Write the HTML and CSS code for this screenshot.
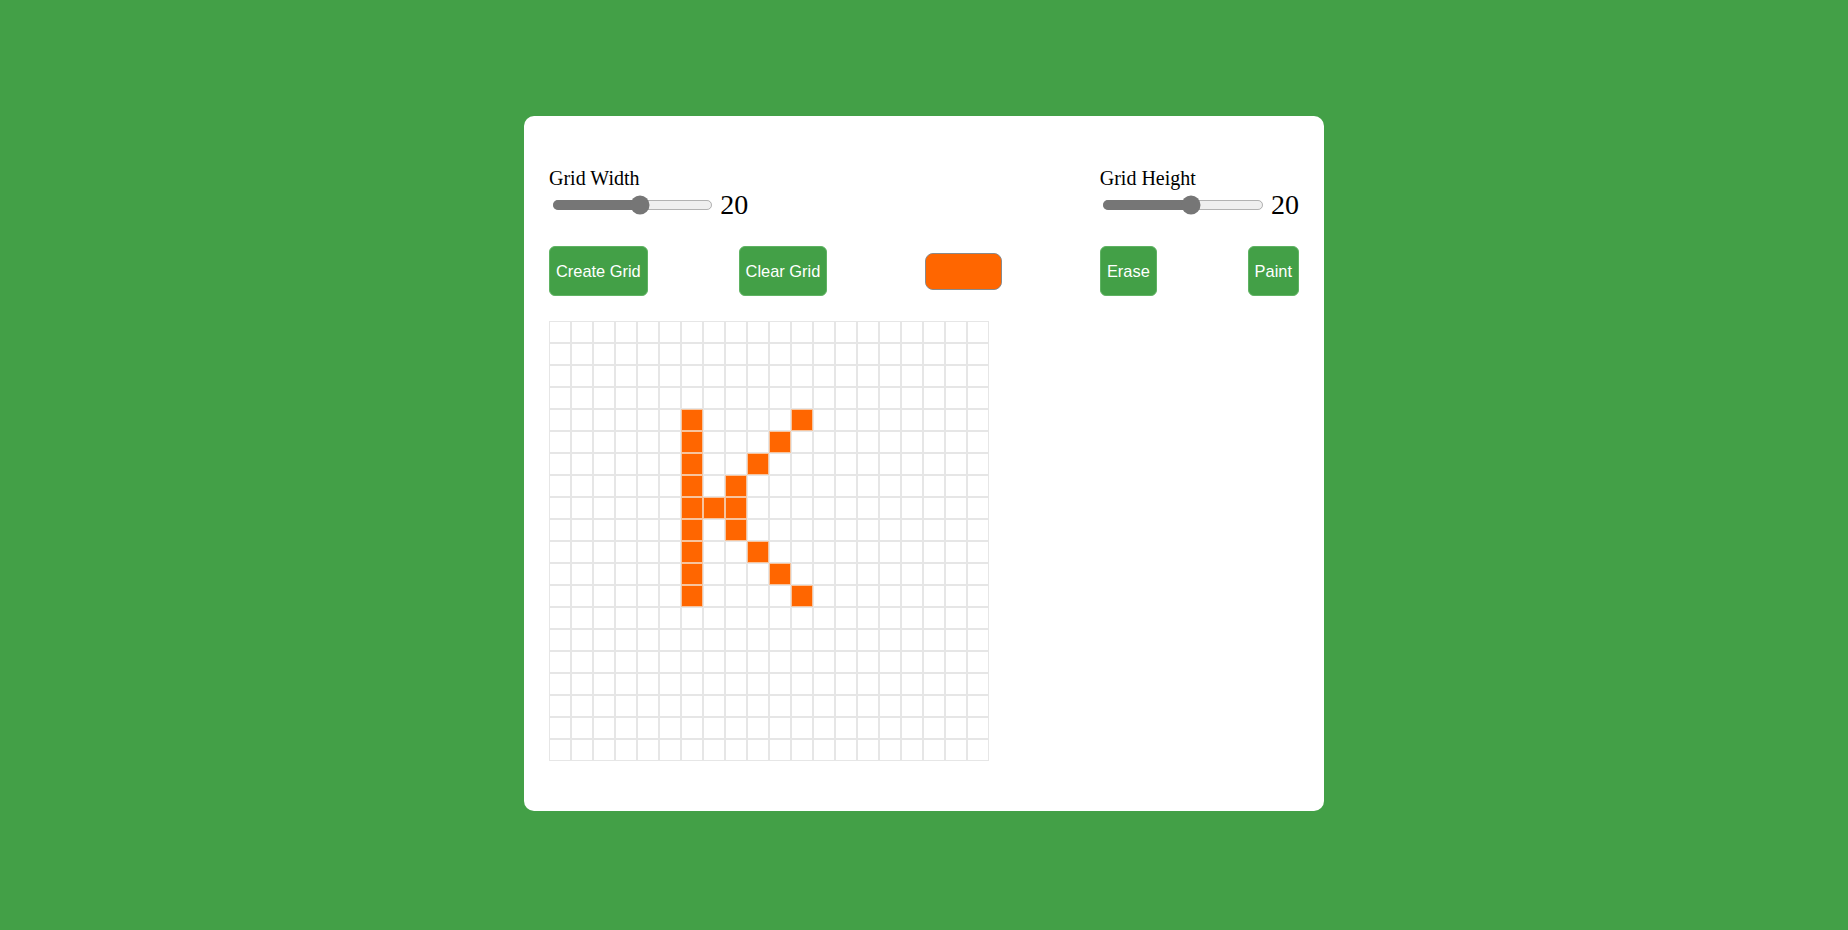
FILE: index.html
```html
<!DOCTYPE html>
<html>
<head>
<meta charset="utf-8">
<title>Pixel Art Maker</title>
<link rel="stylesheet" href="styles.css">
</head>
<body>
<div class="card">
  <div class="sizes">
    <div class="size">
      <label class="label">Grid Width</label>
      <div class="slider-row"><input class="range" type="range" min="1" max="35" value="20"><span class="val">20</span></div>
    </div>
    <div class="size">
      <label class="label">Grid Height</label>
      <div class="slider-row"><input class="range" type="range" min="1" max="35" value="20"><span class="val">20</span></div>
    </div>
  </div>
  <div class="actions">
    <button class="btn">Create Grid</button>
    <button class="btn">Clear Grid</button>
    <input class="picker" type="color" value="#ff6600">
    <button class="btn">Erase</button>
    <button class="btn">Paint</button>
  </div>
  <div class="grid">
    <span class="c"></span><span class="c"></span><span class="c"></span><span class="c"></span><span class="c"></span><span class="c"></span><span class="c"></span><span class="c"></span><span class="c"></span><span class="c"></span><span class="c"></span><span class="c"></span><span class="c"></span><span class="c"></span><span class="c"></span><span class="c"></span><span class="c"></span><span class="c"></span><span class="c"></span><span class="c"></span>
    <span class="c"></span><span class="c"></span><span class="c"></span><span class="c"></span><span class="c"></span><span class="c"></span><span class="c"></span><span class="c"></span><span class="c"></span><span class="c"></span><span class="c"></span><span class="c"></span><span class="c"></span><span class="c"></span><span class="c"></span><span class="c"></span><span class="c"></span><span class="c"></span><span class="c"></span><span class="c"></span>
    <span class="c"></span><span class="c"></span><span class="c"></span><span class="c"></span><span class="c"></span><span class="c"></span><span class="c"></span><span class="c"></span><span class="c"></span><span class="c"></span><span class="c"></span><span class="c"></span><span class="c"></span><span class="c"></span><span class="c"></span><span class="c"></span><span class="c"></span><span class="c"></span><span class="c"></span><span class="c"></span>
    <span class="c"></span><span class="c"></span><span class="c"></span><span class="c"></span><span class="c"></span><span class="c"></span><span class="c"></span><span class="c"></span><span class="c"></span><span class="c"></span><span class="c"></span><span class="c"></span><span class="c"></span><span class="c"></span><span class="c"></span><span class="c"></span><span class="c"></span><span class="c"></span><span class="c"></span><span class="c"></span>
    <span class="c"></span><span class="c"></span><span class="c"></span><span class="c"></span><span class="c"></span><span class="c"></span><span class="c p"></span><span class="c"></span><span class="c"></span><span class="c"></span><span class="c"></span><span class="c p"></span><span class="c"></span><span class="c"></span><span class="c"></span><span class="c"></span><span class="c"></span><span class="c"></span><span class="c"></span><span class="c"></span>
    <span class="c"></span><span class="c"></span><span class="c"></span><span class="c"></span><span class="c"></span><span class="c"></span><span class="c p"></span><span class="c"></span><span class="c"></span><span class="c"></span><span class="c p"></span><span class="c"></span><span class="c"></span><span class="c"></span><span class="c"></span><span class="c"></span><span class="c"></span><span class="c"></span><span class="c"></span><span class="c"></span>
    <span class="c"></span><span class="c"></span><span class="c"></span><span class="c"></span><span class="c"></span><span class="c"></span><span class="c p"></span><span class="c"></span><span class="c"></span><span class="c p"></span><span class="c"></span><span class="c"></span><span class="c"></span><span class="c"></span><span class="c"></span><span class="c"></span><span class="c"></span><span class="c"></span><span class="c"></span><span class="c"></span>
    <span class="c"></span><span class="c"></span><span class="c"></span><span class="c"></span><span class="c"></span><span class="c"></span><span class="c p"></span><span class="c"></span><span class="c p"></span><span class="c"></span><span class="c"></span><span class="c"></span><span class="c"></span><span class="c"></span><span class="c"></span><span class="c"></span><span class="c"></span><span class="c"></span><span class="c"></span><span class="c"></span>
    <span class="c"></span><span class="c"></span><span class="c"></span><span class="c"></span><span class="c"></span><span class="c"></span><span class="c p"></span><span class="c p"></span><span class="c p"></span><span class="c"></span><span class="c"></span><span class="c"></span><span class="c"></span><span class="c"></span><span class="c"></span><span class="c"></span><span class="c"></span><span class="c"></span><span class="c"></span><span class="c"></span>
    <span class="c"></span><span class="c"></span><span class="c"></span><span class="c"></span><span class="c"></span><span class="c"></span><span class="c p"></span><span class="c"></span><span class="c p"></span><span class="c"></span><span class="c"></span><span class="c"></span><span class="c"></span><span class="c"></span><span class="c"></span><span class="c"></span><span class="c"></span><span class="c"></span><span class="c"></span><span class="c"></span>
    <span class="c"></span><span class="c"></span><span class="c"></span><span class="c"></span><span class="c"></span><span class="c"></span><span class="c p"></span><span class="c"></span><span class="c"></span><span class="c p"></span><span class="c"></span><span class="c"></span><span class="c"></span><span class="c"></span><span class="c"></span><span class="c"></span><span class="c"></span><span class="c"></span><span class="c"></span><span class="c"></span>
    <span class="c"></span><span class="c"></span><span class="c"></span><span class="c"></span><span class="c"></span><span class="c"></span><span class="c p"></span><span class="c"></span><span class="c"></span><span class="c"></span><span class="c p"></span><span class="c"></span><span class="c"></span><span class="c"></span><span class="c"></span><span class="c"></span><span class="c"></span><span class="c"></span><span class="c"></span><span class="c"></span>
    <span class="c"></span><span class="c"></span><span class="c"></span><span class="c"></span><span class="c"></span><span class="c"></span><span class="c p"></span><span class="c"></span><span class="c"></span><span class="c"></span><span class="c"></span><span class="c p"></span><span class="c"></span><span class="c"></span><span class="c"></span><span class="c"></span><span class="c"></span><span class="c"></span><span class="c"></span><span class="c"></span>
    <span class="c"></span><span class="c"></span><span class="c"></span><span class="c"></span><span class="c"></span><span class="c"></span><span class="c"></span><span class="c"></span><span class="c"></span><span class="c"></span><span class="c"></span><span class="c"></span><span class="c"></span><span class="c"></span><span class="c"></span><span class="c"></span><span class="c"></span><span class="c"></span><span class="c"></span><span class="c"></span>
    <span class="c"></span><span class="c"></span><span class="c"></span><span class="c"></span><span class="c"></span><span class="c"></span><span class="c"></span><span class="c"></span><span class="c"></span><span class="c"></span><span class="c"></span><span class="c"></span><span class="c"></span><span class="c"></span><span class="c"></span><span class="c"></span><span class="c"></span><span class="c"></span><span class="c"></span><span class="c"></span>
    <span class="c"></span><span class="c"></span><span class="c"></span><span class="c"></span><span class="c"></span><span class="c"></span><span class="c"></span><span class="c"></span><span class="c"></span><span class="c"></span><span class="c"></span><span class="c"></span><span class="c"></span><span class="c"></span><span class="c"></span><span class="c"></span><span class="c"></span><span class="c"></span><span class="c"></span><span class="c"></span>
    <span class="c"></span><span class="c"></span><span class="c"></span><span class="c"></span><span class="c"></span><span class="c"></span><span class="c"></span><span class="c"></span><span class="c"></span><span class="c"></span><span class="c"></span><span class="c"></span><span class="c"></span><span class="c"></span><span class="c"></span><span class="c"></span><span class="c"></span><span class="c"></span><span class="c"></span><span class="c"></span>
    <span class="c"></span><span class="c"></span><span class="c"></span><span class="c"></span><span class="c"></span><span class="c"></span><span class="c"></span><span class="c"></span><span class="c"></span><span class="c"></span><span class="c"></span><span class="c"></span><span class="c"></span><span class="c"></span><span class="c"></span><span class="c"></span><span class="c"></span><span class="c"></span><span class="c"></span><span class="c"></span>
    <span class="c"></span><span class="c"></span><span class="c"></span><span class="c"></span><span class="c"></span><span class="c"></span><span class="c"></span><span class="c"></span><span class="c"></span><span class="c"></span><span class="c"></span><span class="c"></span><span class="c"></span><span class="c"></span><span class="c"></span><span class="c"></span><span class="c"></span><span class="c"></span><span class="c"></span><span class="c"></span>
    <span class="c"></span><span class="c"></span><span class="c"></span><span class="c"></span><span class="c"></span><span class="c"></span><span class="c"></span><span class="c"></span><span class="c"></span><span class="c"></span><span class="c"></span><span class="c"></span><span class="c"></span><span class="c"></span><span class="c"></span><span class="c"></span><span class="c"></span><span class="c"></span><span class="c"></span><span class="c"></span>
  </div>
</div>
</body>
</html>
```

FILE: styles.css
```css
html, body {
  margin: 0;
  padding: 0;
}

body {
  background: #43a047;
  min-height: 930px;
  display: flex;
  justify-content: center;
  align-items: flex-start;
  font-family: "Liberation Serif", "Times New Roman", serif;
}

.card {
  box-sizing: border-box;
  width: 800px;
  margin-top: 116px;
  padding: 51px 25px 50px;
  background: #ffffff;
  border-radius: 10px;
}

.sizes {
  display: flex;
  justify-content: space-between;
}

.size {
  display: flex;
  flex-direction: column;
}

.label {
  font-size: 20px;
  line-height: 23px;
  color: #000;
}

.slider-row {
  display: flex;
  align-items: center;
  gap: 5px;
  height: 30px;
}

.range {
  zoom: 1.25;
  margin: 2px 2px;
  accent-color: #767676;
}

.val {
  font-size: 28px;
  line-height: 30px;
  color: #000;
}

.actions {
  display: flex;
  justify-content: space-between;
  align-items: center;
  margin-top: 26px;
}

.btn {
  box-sizing: border-box;
  height: 50px;
  padding: 0 6px;
  background: #43a047;
  color: #ffffff;
  border: 1px solid #5fb363;
  border-radius: 6px;
  font-family: "Liberation Sans", Arial, sans-serif;
  font-size: 16.4px;
}

.picker {
  box-sizing: border-box;
  width: 77px;
  height: 37px;
  margin: 0 7px;
  padding: 0;
  border: 1px solid #8a8a8a;
  border-radius: 8px;
  background: #ff6600;
  -webkit-appearance: none;
  appearance: none;
  overflow: hidden;
}

.picker::-webkit-color-swatch-wrapper {
  padding: 0;
}

.picker::-webkit-color-swatch {
  border: none;
  border-radius: 7px;
}

.grid {
  display: grid;
  grid-template-columns: repeat(20, 22px);
  grid-auto-rows: 22px;
  width: 440px;
  margin-top: 25px;
}

.c {
  box-sizing: border-box;
  border: 1px solid #e6e6e6;
  background: #ffffff;
}

.c.p {
  background: #ff6600;
  border-color: #f7c49e;
}
```
